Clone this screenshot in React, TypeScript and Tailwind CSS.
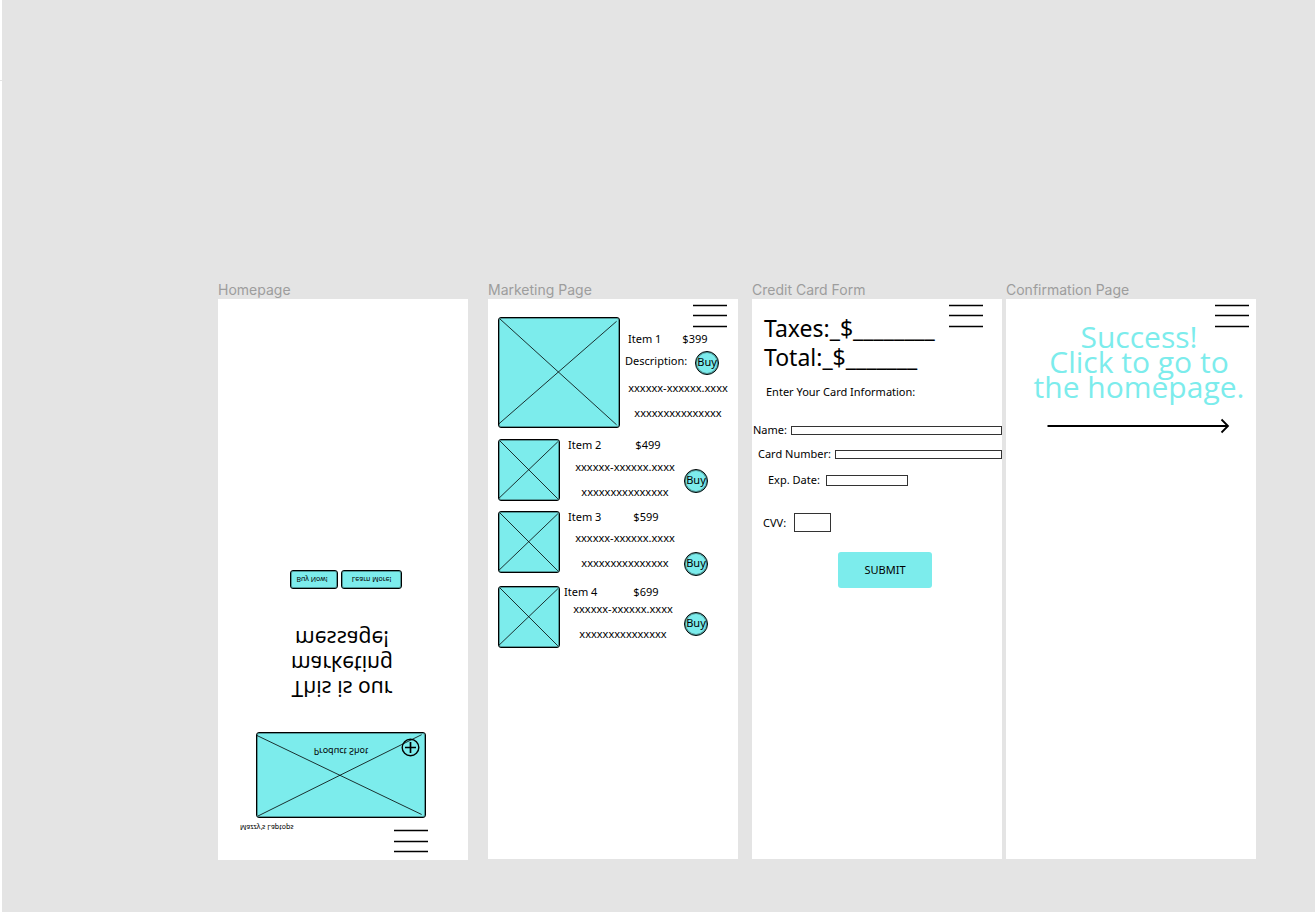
import type { ReactNode } from "react";

const SANS = "font-['Noto_Sans','Open_Sans',sans-serif]";

function Menu({ place }: { place: string }) {
  return (
    <button type="button" aria-label="Menu" className={`absolute block ${place}`}>
      <svg width="34" height="24" viewBox="0 0 34 24" stroke="#000" strokeWidth="1.4" className="block">
        <path d="M0 1.5H34M0 11.5H34M0 22.5H34" />
      </svg>
    </button>
  );
}

function Placeholder({ size, children }: { size: string; children?: ReactNode }) {
  return (
    <div className={`relative shrink-0 overflow-hidden rounded-[3px] border border-black bg-[#7cecec] inset-ring-1 inset-ring-black/35 ${size}`}>
      <svg className="block h-full w-full" stroke="#000" strokeWidth="0.8" aria-hidden="true">
        <line x1="1" y1="1" x2="98%" y2="98%" />
        <line x1="0" y1="97%" x2="98%" y2="3%" />
      </svg>
      {children}
    </div>
  );
}

function Buy({ place }: { place: string }) {
  return (
    <button
      type="button"
      className={`flex size-6 shrink-0 items-center justify-center rounded-full border border-black bg-[#7cecec] text-[11px] leading-4 inset-ring-1 inset-ring-black/35 ${place}`}
    >
      <span className="-mt-0.5">Buy</span>
    </button>
  );
}

function Frame({ title, height, className, children }: { title: string; height: string; className: string; children: ReactNode }) {
  return (
    <section className="w-[250px] shrink-0">
      <h2 className="h-[18px] whitespace-nowrap font-['Inter',sans-serif] text-sm leading-[18px] text-[#9d9d9d]">{title}</h2>
      <div className={`relative overflow-hidden bg-white text-black ${height} ${className}`}>{children}</div>
    </section>
  );
}

function Blurb() {
  return (
    <p className="text-center leading-[25px]">
      xxxxxx-xxxxxx.xxxx
      <br />
      xxxxxxxxxxxxxxx
    </p>
  );
}

const items = [
  { name: "Item 2", price: "$499", row: "mt-[11px]", column: "ml-2 w-[114px]", head: "gap-[34px]", blurb: "mt-px", buy: "mt-[30px]" },
  { name: "Item 3", price: "$599", row: "mt-[10px]", column: "ml-2 w-[114px]", head: "gap-8", blurb: "", buy: "mt-[41px]" },
  { name: "Item 4", price: "$699", row: "mt-[13px]", column: "ml-1 w-[118px]", head: "gap-9", blurb: "-mt-1", buy: "mt-[26px]" },
];

function Homepage() {
  return (
    <Frame title="Homepage" height="h-[561px]" className="-scale-y-100 pt-[27px]">
      <Menu place="right-10 top-[7px]" />
      <p className="pl-[22px] text-[7px] leading-3">Mazzy's Laptops</p>
      <div className="mt-[3px] pl-[38px]">
        <Placeholder size="h-[86px] w-[170px]">
          <span className="absolute inset-x-0 top-[60px] text-center text-[9px] leading-3">Product Shot</span>
          <button type="button" aria-label="Add" className="absolute right-[5px] top-[60px]">
            <svg width="19" height="19" viewBox="0 0 19 19" fill="none" stroke="#000" strokeWidth="1.4" className="block">
              <circle cx="9.5" cy="9.5" r="8.3" />
              <path d="M9.5 4V15M4 9.5H15" strokeWidth="1.7" />
            </svg>
          </button>
        </Placeholder>
      </div>
      <h1 className="mt-[31px] pr-0.5 text-center text-[21px] leading-[25px]">
        This is our
        <br />
        marketing
        <br />
        message!
      </h1>
      <div className="mt-[37px] flex gap-[3px] pl-[72px] text-[7px] leading-3">
        <button type="button" className="h-[19px] w-12 rounded-[3px] border border-black bg-[#7cecec] pr-1 inset-ring-1 inset-ring-black/35">
          Buy Now!
        </button>
        <button type="button" className="h-[19px] w-[61px] rounded-[3px] border border-black bg-[#7cecec] inset-ring-1 inset-ring-black/35">
          Learn More!
        </button>
      </div>
    </Frame>
  );
}

function Marketing() {
  return (
    <Frame title="Marketing Page" height="h-[560px]" className="pl-[10px] pt-[18px] text-[11px] leading-4">
      <Menu place="right-[11px] top-[5px]" />
      <article className="flex">
        <Placeholder size="h-[111px] w-[122px]" />
        <div className="ml-[5px] mt-[14px] w-[106px]">
          <div className="flex gap-[21px] pl-[3px]">
            <h3>Item 1</h3>
            <span>$399</span>
          </div>
          <div className="flex items-center gap-2 whitespace-nowrap">
            <span>Description:</span>
            <Buy place="mt-1" />
          </div>
          <Blurb />
        </div>
      </article>
      {items.map((item) => (
        <article key={item.name} className={`flex h-[62px] ${item.row}`}>
          <Placeholder size="size-[62px]" />
          <div className={`-mt-0.5 ${item.column}`}>
            <div className={`flex ${item.head}`}>
              <h3>{item.name}</h3>
              <span>{item.price}</span>
            </div>
            <div className={item.blurb}>
              <Blurb />
            </div>
          </div>
          <Buy place={`ml-0.5 ${item.buy}`} />
        </article>
      ))}
    </Frame>
  );
}

const fields = [
  { id: "name", label: "Name:", row: "mt-[22px] pl-px gap-1", input: "h-[9px] flex-1" },
  { id: "card", label: "Card Number:", row: "mt-2 pl-[6px] gap-1", input: "h-[9px] flex-1" },
  { id: "exp", label: "Exp. Date:", row: "mt-[10px] pl-4 gap-[6px]", input: "h-[11px] w-[82px]" },
  { id: "cvv", label: "CVV:", row: "mt-[25px] pl-[11px] gap-2", input: "h-[19px] w-[37px]" },
];

function CreditCard() {
  return (
    <Frame title="Credit Card Form" height="h-[560px]" className="pt-[15px] text-[11px] leading-4">
      <Menu place="right-[19px] top-[5px]" />
      <p className="pl-3 text-[23px] leading-[29px]">
        Taxes:_$________
        <br />
        Total:_$_______
      </p>
      <form onSubmit={(e) => e.preventDefault()}>
        <h3 className="mt-3 pl-[14px]">Enter Your Card Information:</h3>
        {fields.map((f) => (
          <div key={f.id} className={`flex items-center ${f.row}`}>
            <label htmlFor={f.id} className="whitespace-nowrap">
              {f.label}
            </label>
            <input id={f.id} type="text" className={`min-w-0 border border-[#333] bg-white px-0.5 text-[8px] ${f.input}`} />
          </div>
        ))}
        <button type="submit" className="ml-[86px] mt-5 block h-9 w-[94px] rounded-[3px] bg-[#7cecec]">
          SUBMIT
        </button>
      </form>
    </Frame>
  );
}

function Confirmation() {
  return (
    <Frame title="Confirmation Page" height="h-[560px]" className="pt-[25px]">
      <Menu place="right-[7px] top-[5px]" />
      <a href="#home" className="block pl-4 text-[#7cecec]">
        <span className="block whitespace-nowrap text-center font-['Open_Sans','Noto_Sans',sans-serif] text-[30px] leading-[25px]">
          Success!
          <br />
          Click to go to
          <br />
          the homepage.
        </span>
        <svg width="183" height="16" viewBox="0 0 183 16" fill="none" stroke="#000" strokeWidth="1.8" className="ml-[25px] mt-[19px] block" aria-hidden="true">
          <path d="M0.5 8H181" />
          <path d="M174.5 1.5L181 8L174.5 14.5" />
        </svg>
      </a>
    </Frame>
  );
}

export default function App() {
  return (
    <div className={`flex min-h-screen bg-[#e4e4e4] ${SANS}`}>
      <div className="w-0.5 shrink-0 bg-white pt-20">
        <div className="h-px bg-[#e4e4e4]" />
      </div>
      <main className="flex items-start pl-[216px] pt-[281px]">
        <Homepage />
        <div className="ml-5 flex gap-[14px]">
          <Marketing />
          <div className="flex gap-1">
            <CreditCard />
            <Confirmation />
          </div>
        </div>
      </main>
    </div>
  );
}
